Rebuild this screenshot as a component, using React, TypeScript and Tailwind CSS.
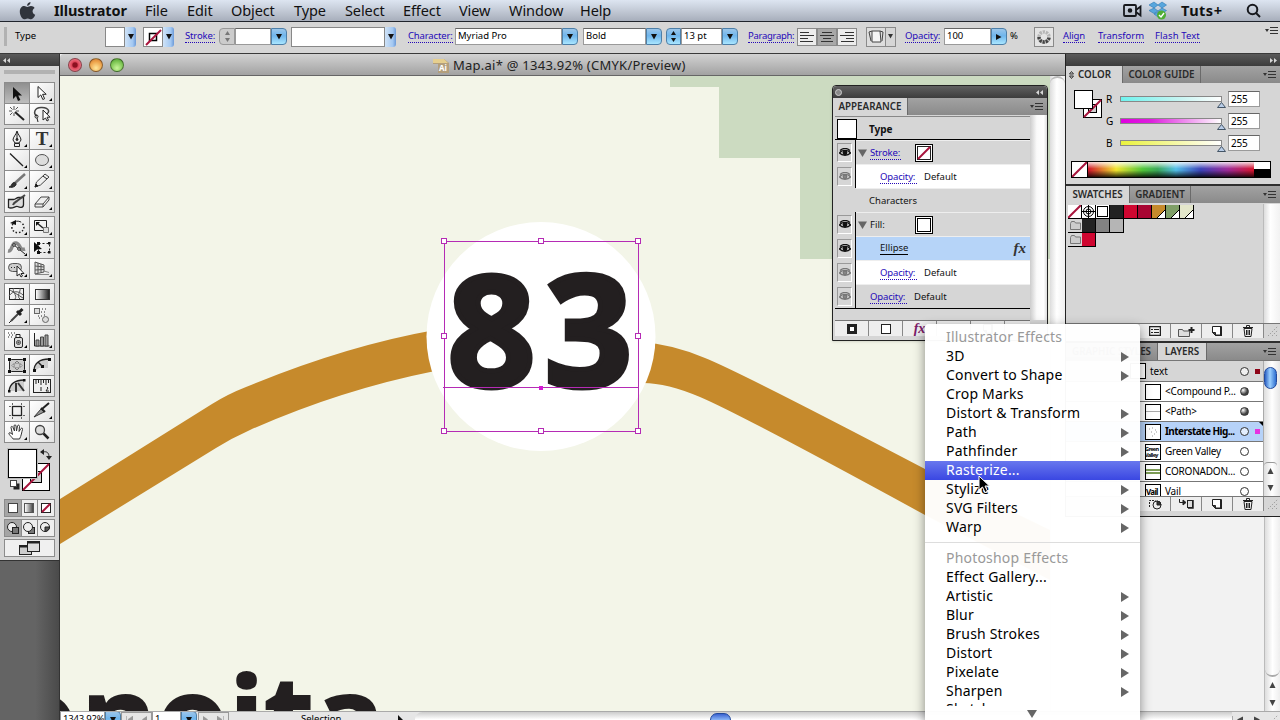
import type { ReactNode } from 'react';
import clsx from 'clsx';

interface MenuEntry {
  label: string;
  arrow?: boolean;
  active?: boolean;
}

interface Layer {
  name: string;
  thumb: ReactNode;
  filled?: boolean;
  selected?: boolean;
}

const barMenus = [
  { label: 'File', width: 'w-[42px]' },
  { label: 'Edit', width: 'w-[44px]' },
  { label: 'Object', width: 'w-[63px]' },
  { label: 'Type', width: 'w-[51px]' },
  { label: 'Select', width: 'w-[58px]' },
  { label: 'Effect', width: 'w-[56px]' },
  { label: 'View', width: 'w-[50px]' },
  { label: 'Window', width: 'w-[71px]' },
  { label: 'Help', width: 'w-[60px]' },
];

const illustratorEffects: MenuEntry[] = [
  { label: '3D', arrow: true },
  { label: 'Convert to Shape', arrow: true },
  { label: 'Crop Marks' },
  { label: 'Distort & Transform', arrow: true },
  { label: 'Path', arrow: true },
  { label: 'Pathfinder', arrow: true },
  { label: 'Rasterize...', active: true },
  { label: 'Stylize', arrow: true },
  { label: 'SVG Filters', arrow: true },
  { label: 'Warp', arrow: true },
];

const photoshopEffects: MenuEntry[] = [
  { label: 'Effect Gallery...' },
  { label: 'Artistic', arrow: true },
  { label: 'Blur', arrow: true },
  { label: 'Brush Strokes', arrow: true },
  { label: 'Distort', arrow: true },
  { label: 'Pixelate', arrow: true },
  { label: 'Sharpen', arrow: true },
];

function Icon({ children, w = 24, h = 20 }: { children: ReactNode; w?: number; h?: number }) {
  return (
    <svg width={w} height={h} viewBox={`0 0 ${w} ${h}`} fill="none" stroke="#222" strokeWidth="1" className="block shrink-0">
      {children}
    </svg>
  );
}

/* Toolbox glyphs, each on a 24x20 cell */
const tools: Record<string, ReactNode> = {
  select: <path d="M8 4v12l3-3 2 5 2.4-1-2.2-4.6H17z" fill="#111" stroke="none" />,
  direct: <path d="M8 3.5v11l2.8-2.6 2 4.6 1.8-.8-2-4.4h3.6z" fill="#fff" />,
  wand: (
    <>
      <path d="M10 8l9 8" strokeWidth="2" />
      <path d="M9 2v4M9 9v3M4 7h3M11 7h3M5 3l2.5 2.5M13 3l-2.5 2.5M5 11l2.5-2.5" stroke="#555" />
    </>
  ),
  lasso: (
    <>
      <path d="M7 12C3 10 4 3 12 3.5S20 9 16 10" stroke="#444" strokeWidth="1.5" />
      <circle cx="6.5" cy="12.5" r="1.5" />
      <path d="M7 14l1 4M13 6v10l2.5-2 1.5 3 1.5-.8-1.5-3h3z" fill="#fff" />
    </>
  ),
  pen: (
    <>
      <path d="M12 2c-1 4-4 6-4 9l2 3h4l2-3c0-3-3-5-4-9z" fill="#eee" />
      <path d="M12 3v7M9.5 14.5h5v3h-5z" />
      <circle cx="12" cy="10.5" r="1" fill="#222" />
    </>
  ),
  line: <path d="M5 3.5l13 12.5" strokeWidth="1.3" />,
  ellipse: <ellipse cx="12" cy="10" rx="6.5" ry="5.5" fill="#ddd" stroke="#555" />,
  brush: (
    <>
      <path d="M10 12L20 3" strokeWidth="2.5" stroke="#777" />
      <path d="M4 16c3 0 2-4 5-4.5 2 0 3 2 1 3.5-2 1.5-4 1.5-6 1z" fill="#333" />
    </>
  ),
  pencil: (
    <>
      <path d="M5 16l1.5-5L15 3l4 3-8.5 8z" fill="#eee" stroke="#444" />
      <path d="M5 16l1-3 2 2zM13 5l4 3" fill="#111" />
    </>
  ),
  blob: (
    <>
      <path d="M3.5 7.5h5c2 0 3-2 5-2h5v7c0 4-4 3-6 2s-5 3-9 1z" fill="#ddd" strokeWidth="1.3" />
      <path d="M8 13c1-3 3-3 4-4l8-6" stroke="#444" strokeWidth="2" />
    </>
  ),
  eraser: <path d="M5 12l6-7h8l-6 7zM5 12v3h8v-3M13 15l6-7V5" fill="#eee" stroke="#444" />,
  rotate: (
    <>
      <path d="M8 7a6 5.5 0 1 0 8-1.5" strokeDasharray="1.5 1.8" strokeWidth="1.5" />
      <path d="M8 6c2-2 5-2.5 8-1" />
      <path d="M5 6l6-3v5z" fill="#111" stroke="none" />
    </>
  ),
  scale: (
    <>
      <path d="M4.5 3.5h12v10h-12z" />
      <path d="M13.5 10.5h5v5h-5z" fill="#ddd" stroke="#777" />
      <path d="M7 6l6 5" strokeWidth="1.5" />
      <path d="M6 5h4l-4 4z" fill="#111" stroke="none" />
    </>
  ),
  warp: (
    <>
      <path d="M3 13c5 1 3-9 8-8s3 8 9 6" stroke="#888" strokeWidth="3.5" />
      <path d="M9 7l11 9" />
      <circle cx="9" cy="7" r="1.3" fill="#fff" />
      <circle cx="14" cy="11" r="1.3" fill="#fff" />
    </>
  ),
  freeTransform: (
    <>
      <path d="M8.5 5.5h11v9h-11z" strokeDasharray="2 2" />
      <path d="M7 4h3v3H7zM18 4h2.5v2.5H18zM18 13h2.5v2.5H18zM7 13h3v3H7z" fill="#111" stroke="none" />
      <path d="M4 4v10l3-2.5 5-.5z" fill="#111" stroke="none" />
    </>
  ),
  shapeBuilder: (
    <>
      <rect x="3.5" y="4.5" width="13" height="8" rx="4" fill="#ccc" stroke="#555" />
      <path d="M6 8.5h8" strokeDasharray="1 2" />
      <path d="M12 7v10l2.5-2 1.5 3 1.5-1-1.5-2.5h3z" fill="#fff" />
    </>
  ),
  perspective: (
    <>
      <path d="M5 3v12l9-2V6zM5 7l9 1M5 11l9-.5M8 4v10M11 5v8.5" fill="#ddd" stroke="#555" />
      <path d="M5 15.5h14M14 12l5 1.5" stroke="#888" />
    </>
  ),
  mesh: (
    <>
      <rect x="4.5" y="4.5" width="14" height="11" />
      <path d="M4 12c4-6 10-5 14-1M9 4c-3 4 4 7 1 11M15 4c1 4-4 8 0 11M5 6l13 8" stroke="#555" />
    </>
  ),
  spray: (
    <>
      <rect x="9.5" y="7.5" width="8" height="10" rx="1.5" fill="#ddd" />
      <path d="M11 7V4.5h4V7M3 3h1M6 3h1M9 3h1M4 5h1M7 5h1M3 7h1M6 7h1" />
      <circle cx="13.5" cy="12.5" r="2" stroke="#444" />
      <circle cx="13.5" cy="12.5" r=".6" />
    </>
  ),
  chart: (
    <>
      <path d="M4.5 3v13h15" />
      <path d="M6 10h3v6H6zM10.5 7h3v9h-3zM15 5h3v11h-3z" fill="#999" stroke="#444" />
    </>
  ),
  eyedropper: (
    <>
      <path d="M6 16l8-8" stroke="#444" strokeWidth="2" />
      <path d="M12 6l4 4M14 7.5l3.5-3.5" strokeWidth="3" />
      <path d="M4 18l2-2" />
    </>
  ),
  blend: (
    <>
      <rect x="4.5" y="3.5" width="5" height="5" fill="#ddd" stroke="#666" />
      <path d="M12 4h1M15 4h1M11 7h1M14 7h1M8 11h1M11 11h1M14 10h1M9 13h1" />
      <circle cx="15.5" cy="14.5" r="3" fill="#ddd" stroke="#666" />
    </>
  ),
  envelope: (
    <>
      <rect x="4.5" y="4.5" width="15" height="12" rx="2" fill="#ccc" />
      <path d="M3 3h3v3H3zM18 3h3v3h-3zM3 15h3v3H3zM18 15h3v3h-3z" fill="#111" stroke="none" />
      <path d="M12 6l2 2h-4zM12 15l2-2h-4zM7 10.5l2-2v4zM17 10.5l-2-2v4z" fill="#fff" stroke="#555" strokeWidth=".7" />
    </>
  ),
  reshape: (
    <>
      <path d="M5 16C4 8 10 4 18 4v9H9z" fill="#ccc" stroke="none" />
      <path d="M4 16C4 8 10 4 19 4" strokeWidth="1.3" />
      <path d="M3 14h3v3H3zM18 3h3v3h-3zM11 10h3v3h-3z" fill="#111" stroke="none" />
      <path d="M12 11L8 7" strokeWidth="1.5" />
    </>
  ),
  anchor: (
    <>
      <path d="M4 15C5 8 10 4 19 4v11h-8z" fill="#ccc" stroke="none" />
      <path d="M4 15C5 8 10 4 19 4" strokeWidth="1.3" />
      <path d="M3 14h2.5v2.5H3zM18 3h2.5v2.5H18z" fill="#111" stroke="none" />
      <path d="M11 7v9M13 7l6 8" strokeWidth="2" stroke="#333" />
    </>
  ),
  measure: (
    <>
      <rect x="3.5" y="3.5" width="17" height="13" fill="#eee" />
      <path d="M6 4v4M8.5 4v3M11 4v5M13.5 4v3M16 4v5M18.5 4v3M11 11v4M17 11l1 1-2 3h3" />
    </>
  ),
  artboard: (
    <>
      <rect x="7.5" y="5.5" width="9" height="9" strokeWidth="1.3" />
      <path d="M7.5 2v2M16.5 2v2M7.5 16v2M16.5 16v2M4 5.5h2M4 14.5h2M18 5.5h2M18 14.5h2" stroke="#666" />
    </>
  ),
  slice: (
    <>
      <path d="M4 16l7-8 3 3z" fill="#999" stroke="#333" />
      <path d="M12 8l7-6M11 7l4 4" strokeWidth="2" />
    </>
  ),
  hand: <path d="M8 17c-1-2-5-5-4-6s3 1 3.5 1.5L6 5.5c0-1.5 1.5-1.5 2 0L9.5 9 9 4c0-1.5 2-1.5 2 0l.5 5 1-5c.5-1.5 2-1 2 .5L14 9.5l2-3c1-1 2 0 1.5 1-1 3-1 6-3 9.5z" fill="#fff" stroke="#333" />,
  zoom: (
    <>
      <circle cx="10" cy="8" r="4.5" fill="#ddd" stroke="#444" strokeWidth="1.3" />
      <path d="M13.5 11.5l5 5" strokeWidth="2.5" />
    </>
  ),
};

const toolGroups: string[][] = [
  ['select', 'direct', 'wand', 'lasso'],
  ['pen', 'type', 'line', 'ellipse', 'brush', 'pencil', 'blob', 'eraser'],
  ['rotate', 'scale', 'warp', 'freeTransform', 'shapeBuilder', 'perspective'],
  ['mesh', 'gradient', 'eyedropper', 'blend'],
  ['spray', 'chart'],
  ['envelope', 'reshape', 'anchor', 'measure'],
  ['artboard', 'slice', 'hand', 'zoom'],
];

const noFlyout = ['select', 'wand', 'lasso', 'blob', 'freeTransform', 'mesh', 'gradient', 'blend', 'envelope', 'reshape', 'anchor', 'measure', 'artboard', 'zoom'];

function ToolCell({ name }: { name: string }) {
  return (
    <div
      className={clsx(
        'relative h-5 w-6',
        name === 'select'
          ? 'bg-[linear-gradient(to_bottom,#8f8f8f,#bdbdbd)]'
          : 'bg-[linear-gradient(135deg,#ffffff,#e2e2e2)]'
      )}
    >
      {name === 'type' && (
        <span className="block text-center font-['Liberation_Serif',serif] text-[19px] leading-5 font-bold text-[#333]">T</span>
      )}
      {name === 'gradient' && (
        <div className="flex h-full items-center justify-center">
          <div className="h-[11px] w-[15px] border border-[#333] bg-[linear-gradient(to_right,#fff,#222)]" />
        </div>
      )}
      {tools[name] && <Icon>{tools[name]}</Icon>}
      {!noFlyout.includes(name) && (
        <svg className="absolute right-0.5 bottom-0.5" width="3" height="3">
          <path d="M3 0v3H0z" fill="#000" />
        </svg>
      )}
    </div>
  );
}

function Toolbox() {
  return (
    <aside className="flex w-[60px] shrink-0 flex-col border-r border-[#333] bg-[linear-gradient(to_right,#646464_60%,#4a4a4a)]">
      <div className="flex h-3 shrink-0 items-center bg-[linear-gradient(to_bottom,#5a5a5a,#3c3c3c)] pl-[3px]">
        <DoubleArrow />
      </div>
      <div className="flex h-[495px] shrink-0 flex-col border-b border-[#333] bg-[#d6d6d6] pl-1">
        <div className="mt-1 mb-2 h-1 w-[51px] bg-[radial-gradient(#888_0.6px,transparent_0.8px)] bg-[size:2px_2px]" />
        <div className="flex flex-col gap-[3px]">
          {toolGroups.map((group, i) => (
            <div key={i} className="grid w-[51px] grid-cols-2 gap-px bg-[#8c8c8c] p-px">
              {group.map((name) => (
                <ToolCell key={name} name={name} />
              ))}
            </div>
          ))}
        </div>
        {/* Fill and stroke proxies */}
        <div className="relative mt-1.5 h-[44px] w-[51px]">
          <div className="absolute top-[14px] left-[18px]">
            <Icon w={28} h={28}>
              <rect x=".5" y=".5" width="27" height="27" fill="#fff" stroke="#000" />
              <rect x="8.5" y="8.5" width="11" height="11" fill="#d0d0d0" stroke="#000" />
              <path d="M1 27L27 1" stroke="#a8143c" strokeWidth="2" />
            </Icon>
          </div>
          <div className="absolute top-0 left-1 size-[29px] border border-black bg-white outline outline-[#bbb]" />
          <svg className="absolute top-0 left-[36px]" width="12" height="11" fill="none" stroke="#222">
            <path d="M3 3c4-1 6 1 6 5" />
            <path d="M0 3l4-3v6zM6 7h6l-3 4z" fill="#222" stroke="none" />
          </svg>
          <svg className="absolute top-[31px] left-1.5" width="10" height="10">
            <rect x="3.5" y="3.5" width="6" height="6" fill="#222" />
            <rect x=".5" y=".5" width="6" height="6" fill="#fff" stroke="#444" />
          </svg>
        </div>
        <div className="mt-[6px] grid w-[51px] grid-cols-3 gap-px bg-[#8c8c8c] p-px">
          <div className="flex h-4 items-center justify-center bg-[#a5a5a5]">
            <div className="size-2.5 border border-[#444] bg-white" />
          </div>
          <div className="flex h-4 items-center justify-center bg-[#eee]">
            <div className="size-2.5 border border-[#555] bg-[linear-gradient(to_right,#fff,#444)]" />
          </div>
          <div className="flex h-4 items-center justify-center bg-[#eee]">
            <NoneBox size={10} />
          </div>
        </div>
        <div className="mt-[2px] grid w-[51px] grid-cols-3 gap-px bg-[#8c8c8c] p-px">
          {['#777', '#777', '#999'].map((shade, i) => (
            <div key={i} className={clsx('flex h-4 items-center justify-center', i === 0 ? 'bg-[#a5a5a5]' : 'bg-[#eee]')}>
              <Icon w={14} h={14}>
                {i < 2 && <rect x="6.5" y="6.5" width="6" height="6" fill={shade} />}
                <circle cx="6" cy="6" r="4.5" fill="#eee" />
                {i === 0 && <rect x="6.5" y="6.5" width="6" height="6" fill={shade} />}
                {i === 2 && <path d="M6 6h4.5a4.5 4.5 0 0 1-4.5 4.5z" fill="#555" />}
              </Icon>
            </div>
          ))}
        </div>
        <div className="mt-[2px] flex h-[18px] w-[51px] items-center justify-center border border-[#8c8c8c] bg-[#f0f0f0]">
          <Icon w={24} h={16}>
            <rect x="1.5" y="5.5" width="12" height="9" fill="#ccc" />
            <path d="M1 6.5h13" strokeWidth="2" />
            <rect x="9.5" y="1.5" width="12" height="10" fill="#ddd" />
            <path d="M9 2.5h13" strokeWidth="2" />
          </Icon>
        </div>
      </div>
    </aside>
  );
}

function DoubleArrow({ right }: { right?: boolean }) {
  return (
    <svg width="7" height="5" className={right ? 'rotate-180' : ''}>
      <path d="M3 0v5L0 2.5zM7 0v5L4 2.5z" fill="#d8d8d8" />
    </svg>
  );
}

function NoneBox({ size }: { size: number }) {
  return (
    <svg width={size} height={size} className="block shrink-0">
      <rect x=".5" y=".5" width={size - 1} height={size - 1} fill="#fff" stroke="#222" />
      <path d={`M1 ${size - 1}L${size - 1} 1`} stroke="#a8143c" strokeWidth="2" />
    </svg>
  );
}

function DropButton({ light, right }: { light?: boolean; right?: boolean }) {
  return (
    <div
      className={clsx(
        'flex items-center justify-center',
        light
          ? 'h-[20px] w-[11px] rounded-r-[3px] bg-[linear-gradient(to_right,#cfe2f6,#a3c8f2_70%,#6c9ad8)]'
          : 'h-[17px] w-4 rounded-r-[4px] border border-[#4d7fa8] bg-[linear-gradient(to_bottom,#9cc6ea,#6fb5ec_45%,#a9e6ff)]'
      )}
    >
      <svg width="6" height="6" className={right ? '-rotate-90' : ''}>
        <path d="M0 0h6L3 5.5z" fill="#111" />
      </svg>
    </div>
  );
}

function Link({ children, className }: { children: ReactNode; className?: string }) {
  return (
    <span className={clsx('inline-block border-b border-dotted border-[#2408b8] leading-[13px] tracking-[-0.15px] whitespace-nowrap text-[#2408b8]', className)}>
      {children}
    </span>
  );
}

function Field({ children, className }: { children?: ReactNode; className?: string }) {
  return (
    <div className={clsx('flex h-[17px] items-center border border-[#9a9a9a] border-t-[#666] bg-white pl-0.5 whitespace-nowrap', className)}>
      {children}
    </div>
  );
}

function MenuBar() {
  return (
    <header className="flex h-[22px] shrink-0 items-center border-b border-[#20242c] bg-[linear-gradient(to_bottom,#dde5f1,#c3cad6_50%,#a7aebb)] text-[14.5px] tracking-[-0.1px] text-[#111]">
      <div className="flex w-[54px] shrink-0 pl-[19px]">
        <svg width="17" height="19" viewBox="0 0 17 19">
          <path d="M11.5 1c.2 2-1.5 4-3.5 3.8C8 2.8 9.5 1.2 11.5 1zM8.3 6c1 0 1.8-1 3.7-1 1.5 0 2.8.7 3.6 1.9-3 1.8-2.5 5.6.6 6.8-.8 2.2-2.3 4.5-4 4.5-1.4 0-1.8-.8-3.5-.8s-2.2.8-3.5.8C3 18.2.8 14 .8 10.8.8 7 3 5.1 5.2 5.1c1.4 0 2.3.9 3.1.9z" fill="#30343c" />
        </svg>
      </div>
      <span className="w-[91px] shrink-0 font-bold">Illustrator</span>
      {barMenus.map((menu) => (
        <span key={menu.label} className={clsx('shrink-0', menu.width)}>
          {menu.label}
        </span>
      ))}
      <div className="ml-auto flex items-center">
        <svg width="19" height="14" fill="none" stroke="#16181d" strokeWidth="1.8">
          <rect x="1" y="1" width="12" height="11" rx="1" />
          <path d="M13 6l4.5-3.5v9L13 8" />
          <circle cx="7" cy="6.5" r="1.4" fill="#16181d" />
        </svg>
        <svg width="20" height="19" className="ml-[6px]">
          <path d="M6 1l4 3-4 3-5-3zM14 1l4.5 3-4.5 3-4-3zM1 9.5L6 7l4 3-4 2.5zM18.5 9.5L14 7l-4 3 4 2.5zM10 11l4 2-4 3-4-3z" fill="#58a6dd" stroke="#2e78b4" strokeWidth=".6" />
          <circle cx="13.5" cy="14" r="4.5" fill="#4fae35" />
          <path d="M11 14l2 2 3-4" stroke="#fff" strokeWidth="1.4" fill="none" />
        </svg>
        <span className="ml-[13px] w-[65px] font-bold tracking-[0.5px]">Tuts+</span>
        <svg width="16" height="16" fill="none" stroke="#16181d" strokeWidth="2" className="mr-[18px]">
          <circle cx="6.5" cy="6.5" r="4.8" />
          <path d="M10 10l4 4" />
        </svg>
      </div>
    </header>
  );
}

function AlignButton({ rows, on }: { rows: string; on?: boolean }) {
  return (
    <div className={clsx('flex h-[18px] w-5 items-center justify-center border border-[#8a8a8a]', on ? 'bg-[#a8a8a8]' : 'bg-[#ececec]')}>
      <svg width="14" height="12">
        <path d={rows} stroke="#333" />
      </svg>
    </div>
  );
}

function ControlBar() {
  return (
    <div className="flex h-8 shrink-0 items-center border-b border-[#3a3a3a] bg-[#d6d6d6] pb-0.5 text-[9.5px] text-black [&>*]:shrink-0">
      <div className="ml-1 h-[19px] w-[11px] bg-[radial-gradient(#888_0.6px,transparent_0.8px)] bg-[size:2px_2px] bg-clip-content pr-2" />
      <span className="w-[90px]">Type</span>
      <div className="flex w-[38px]">
        <div className="h-[20px] w-5 border border-[#888] bg-white" />
        <DropButton light />
      </div>
      <div className="flex w-[42px]">
        <div className="border border-[#888] bg-white">
          <Icon w={18} h={18}>
            <rect x="5.5" y="5.5" width="7" height="7" stroke="#000" strokeWidth="1.5" />
            <path d="M2 17L17 2" stroke="#a8143c" strokeWidth="2" />
          </Icon>
        </div>
        <DropButton light />
      </div>
      <div className="w-[34px]"><Link>Stroke:</Link></div>
      <div className="flex w-[72px]">
        <div className="flex h-[17px] w-4 flex-col items-center justify-center gap-[3px] rounded-l border border-[#999] bg-[#ccc]">
          <svg width="5" height="4"><path d="M0 4h5L2.5 0z" fill="#777" /></svg>
          <svg width="5" height="4"><path d="M0 0h5L2.5 4z" fill="#777" /></svg>
        </div>
        <Field className="w-9" />
        <DropButton />
      </div>
      <div className="flex w-[117px]">
        <div className="h-[20px] w-[94px] border border-[#888] bg-white" />
        <DropButton light />
      </div>
      <div className="w-[47px]"><Link>Character:</Link></div>
      <div className="flex w-[128px]">
        <Field className="w-[107px]">Myriad Pro</Field>
        <DropButton />
      </div>
      <div className="flex w-[83px]">
        <Field className="w-[63px]">Bold</Field>
        <DropButton />
      </div>
      <div className="flex w-[82px]">
        <div className="flex h-[17px] w-[15px] flex-col items-center justify-center gap-[3px] rounded-l-[4px] border border-[#4d7fa8] bg-[linear-gradient(to_bottom,#9cc6ea,#6fb5ec_45%,#a9e6ff)]">
          <svg width="5" height="4"><path d="M0 4h5L2.5 0z" fill="#111" /></svg>
          <svg width="5" height="4"><path d="M0 0h5L2.5 4z" fill="#111" /></svg>
        </div>
        <Field className="w-[41px]">13 pt</Field>
        <DropButton />
      </div>
      <div className="w-[49px]"><Link className="tracking-[-0.3px]!">Paragraph:</Link></div>
      <div className="flex w-[69px]">
        <AlignButton rows="M0 1.5h9M0 4.5h14M0 7.5h8M0 10.5h13" />
        <AlignButton on rows="M2 1.5h10M0 4.5h14M3 7.5h8M1 10.5h12" />
        <AlignButton rows="M5 1.5h9M0 4.5h14M6 7.5h8M1 10.5h13" />
      </div>
      <div className="flex w-[39px]">
        <div className="flex h-5 w-5 items-center justify-center border border-[#8a8a8a] bg-[#ddd]">
          <Icon w={16} h={14}>
            <path d="M4 1h8l1 11H4zM1 2l2 9M15 2l-1 9M1 2l3-1M15 2l-3-1" stroke="#444" fill="#f5f5f5" />
          </Icon>
        </div>
        <div className="flex h-5 w-2.5 items-center justify-center border border-l-0 border-[#8a8a8a]">
          <svg width="5" height="5"><path d="M0 0h5L2.5 4.5z" fill="#333" /></svg>
        </div>
      </div>
      <div className="w-[39px]"><Link>Opacity:</Link></div>
      <div className="flex w-[66px]">
        <Field className="w-[47px]">100</Field>
        <DropButton right />
      </div>
      <span className="w-[24px]">%</span>
      <div className="flex h-5 w-5 items-center justify-center border border-[#8a8a8a] bg-[#e4e4e4]">
        <svg width="16" height="16" fill="none" strokeWidth="3.5">
          <circle cx="8" cy="8" r="5" stroke="#b5b5b5" strokeDasharray="2.2 .9" />
          <path d="M3 8a5 5 0 0 0 10 0" stroke="#444" strokeDasharray="2.2 .9" />
        </svg>
      </div>
      <div className="ml-[9px] w-[35px]"><Link>Align</Link></div>
      <div className="w-[57px]"><Link className="tracking-normal!">Transform</Link></div>
      <div className="w-[110px]"><Link className="tracking-[0.1px]!">Flash Text</Link></div>
      <PanelMenu className="mb-2.5" />
    </div>
  );
}

function PanelMenu({ className }: { className?: string }) {
  return (
    <svg width="13" height="9" className={clsx('shrink-0', className)}>
      <path d="M0 2h4L2 5z" fill="#333" />
      <path d="M5 .5h8M5 3.5h8M5 6.5h8" stroke="#333" />
    </svg>
  );
}

function PanelTabs({ tabs, active }: { tabs: { label: string; width: string; glyph?: boolean }[]; active: string }) {
  return (
    <div className="flex h-[17px] shrink-0 items-stretch bg-[linear-gradient(to_bottom,#a2a2a2,#8a8a8a)] text-[9.8px] font-semibold text-[#2a2a2a]">
      {tabs.map((tab) => (
        <div
          key={tab.label}
          className={clsx(
            'flex items-center justify-center gap-1 border-r border-[#6a6a6a] leading-none whitespace-nowrap',
            tab.width,
            tab.label === active && 'bg-[#d6d6d6]'
          )}
        >
          {tab.glyph && (
            <svg width="5" height="8" fill="none" stroke="#333"><path d="M.5 3l2-2.5 2 2.5zM.5 5l2 2.5 2-2.5z" /></svg>
          )}
          {tab.label}
        </div>
      ))}
      <PanelMenu className="mt-[5px] mr-1 ml-auto" />
    </div>
  );
}

const channels = [
  { name: 'R', fill: 'bg-[linear-gradient(to_right,#6ff3ee,#c8f4f2_60%,#fff)]' },
  { name: 'G', fill: 'bg-[linear-gradient(to_right,#e000e0,#dd20dd_30%,#fff)]' },
  { name: 'B', fill: 'bg-[linear-gradient(to_right,#eaf23c,#f6f8b0_60%,#fff)]' },
];

function ColorPanel() {
  return (
    <section className="flex h-[101px] shrink-0 flex-col bg-[#d6d6d6]">
      <div className="flex h-[78px]">
        <div className="relative w-[36px] shrink-0">
          <div className="absolute top-4 left-[17px]">
            <Icon w={19} h={19}>
              <rect x=".5" y=".5" width="18" height="18" fill="#fff" stroke="#000" />
              <rect x="5.5" y="5.5" width="8" height="8" fill="#d0d0d0" stroke="#000" />
              <path d="M1 18L18 1" stroke="#a8143c" strokeWidth="2" />
            </Icon>
          </div>
          <div className="absolute top-[7px] left-2 size-[19px] border border-black bg-white" />
        </div>
        <div className="flex flex-col pt-2">
          {channels.map((channel) => (
            <div key={channel.name} className="flex h-[22px] items-start text-[10px]">
              <span className="w-[18px] pl-1 leading-[16px]">{channel.name}</span>
              <div className="relative mt-[5px] h-1.5 w-[102px] border border-[#888]">
                <div className={clsx('h-full', channel.fill)} />
                <svg className="absolute top-[5px] left-[96px]" width="9" height="6">
                  <path d="M.5 5.5L4.5.5l4 5z" fill="#b9cde8" stroke="#456" />
                </svg>
              </div>
              <Field className="ml-[6px] h-4! w-8 tracking-[-0.2px]">255</Field>
            </div>
          ))}
        </div>
      </div>
      <div className="ml-[5px] flex h-[17px] w-[200px] border border-black">
        <div className="h-full w-4 overflow-hidden border-r border-black">
          <svg width="15" height="15" className="block">
            <rect width="15" height="15" fill="#fff" />
            <path d="M0 15L15 0" stroke="#a8143c" strokeWidth="2" />
          </svg>
        </div>
        <div className="h-full flex-1 bg-[linear-gradient(to_bottom,rgba(255,255,255,.85),transparent_45%,transparent_55%,rgba(0,0,0,.8)),linear-gradient(to_right,#d0142c,#f2e52e_17%,#4fc53a_33%,#3aa85a_42%,#52bfe8_53%,#3b42b8_68%,#9c2a98_84%,#d8142c)]" />
        <div className="h-full w-4 bg-[linear-gradient(to_bottom,#fff_50%,#000_50%)]" />
      </div>
    </section>
  );
}

function Swatch({ className, corner }: { className: string; corner?: boolean }) {
  return (
    <div className={clsx('size-3.5 border-r border-b border-black', className)}>
      {corner && (
        <svg width="13" height="13" className="block">
          <path d="M13 5v8H5z" fill="#fff" />
          <path d="M13 5l-8 8" stroke="#000" />
        </svg>
      )}
    </div>
  );
}

function FolderIcon() {
  return (
    <div className="flex size-3.5 items-center justify-center border-b border-black">
      <svg width="11" height="9"><path d="M.5 8.5v-6l1-2h3l1 1.5h5v6.5z" fill="#ccc" stroke="#777" /></svg>
    </div>
  );
}

function SwatchesPanel() {
  return (
    <section className="flex h-[137px] shrink-0 flex-col bg-[#d6d6d6]">
      <div className="flex h-[119px]">
        <div className="flex flex-1 flex-col border-r border-[#bbb] pt-px pl-0.5">
          <div className="flex">
            <div className="size-3.5 border-r border-b border-black bg-white">
              <svg width="13" height="13" className="block"><path d="M0 13L13 0" stroke="#a8143c" strokeWidth="2" /></svg>
            </div>
            <div className="size-3.5 border-r border-b border-black bg-white">
              <svg width="13" height="13" className="block" fill="none" stroke="#000">
                <circle cx="6.5" cy="6.5" r="5" />
                <circle cx="6.5" cy="6.5" r="2.5" />
                <path d="M6.5 0v13M0 6.5h13" />
              </svg>
            </div>
            <div className="size-3.5 border-r border-b border-black bg-white p-px">
              <div className="size-full border border-black" />
            </div>
            <Swatch className="bg-[#222]" />
            <Swatch className="bg-[#cf0630]" />
            <Swatch className="bg-[#a80432]" />
            <Swatch className="bg-[#c68a2c]" corner />
            <Swatch className="bg-[#7f9f67]" corner />
            <Swatch className="bg-[#e3e6ca]" corner />
          </div>
          <div className="flex">
            <FolderIcon />
            <Swatch className="bg-[#222]" />
            <Swatch className="bg-[#828282]" />
            <Swatch className="bg-[#b5b5b5]" />
          </div>
          <div className="flex">
            <FolderIcon />
            <Swatch className="bg-[#cf0630]" />
          </div>
        </div>
        <div className="w-4 bg-[linear-gradient(to_right,#ddd,#fff_40%,#f2f2f2)]" />
      </div>
      <PanelFooter icons={[<SwatchKinds key="kinds" />, <FolderPlus key="group" />, <PageIcon key="new" />, <TrashIcon key="trash" />]} />
    </section>
  );
}

function SwatchKinds() {
  return (
    <Icon w={12} h={10}>
      <rect x=".5" y=".5" width="11" height="9" strokeWidth="1.5" />
      <path d="M2 3.5h2M5 3.5h5M2 6.5h2M5 6.5h5" />
    </Icon>
  );
}

function FolderPlus() {
  return (
    <Icon w={17} h={11}>
      <path d="M.5 10.5v-7h4l1 1.5h6v5.5z" fill="#ddd" stroke="#555" />
      <path d="M13.5 1v6M10.5 4h6" strokeWidth="2" />
    </Icon>
  );
}

function PageIcon() {
  return (
    <Icon w={10} h={10}>
      <path d="M.5.5h9v9h-6l-3-3z" fill="#fff" />
      <path d="M.5 6.5h3v3z" fill="#444" />
      <path d="M9 1v8.5H4" strokeWidth="2" />
    </Icon>
  );
}

function TrashIcon() {
  return (
    <Icon w={10} h={12}>
      <path d="M1 3.5l1 8h6l1-8zM0 2.5h10M3.5 2V.5h3V2M3.5 5v5M5 5v5M6.5 5v5" />
    </Icon>
  );
}

function PanelFooter({ icons }: { icons: ReactNode[] }) {
  return (
    <div className="flex h-[15px] shrink-0 border-t border-[#777] bg-[#d6d6d6] pl-[74px]">
      {icons.map((icon, i) => (
        <div key={i} className="flex w-[31px] items-center justify-center border-r border-[#888] bg-[#eee]">
          {icon}
        </div>
      ))}
      <div className="flex flex-1 items-end justify-end p-0.5">
        <Grip />
      </div>
    </div>
  );
}

function Grip() {
  return (
    <svg width="10" height="10" fill="none" stroke="#888" strokeDasharray="1 1.8">
      <path d="M0 10L10 0M4 10l6-6M8 10l2-2" />
    </svg>
  );
}

const layers: Layer[] = [
  { name: '<Compound P...', thumb: null, filled: true },
  { name: '<Path>', thumb: <div className="mt-1.5 h-px bg-[#aaa]" />, filled: true },
  {
    name: 'Interstate Hig...',
    thumb: (
      <svg width="14" height="14"><path d="M3 4h1M6 3h1M9 5h1M5 7h1M8 9h1M10 7h1M6 11h1" stroke="#999" /></svg>
    ),
    selected: true,
  },
  { name: 'Green Valley', thumb: <div className="-ml-px pt-px text-[5.5px] leading-[6px] font-bold tracking-[-0.6px]">Green Valley</div> },
  { name: 'CORONADON...', thumb: <div className="mt-[4px] h-[5px] border-y-2 border-[#7c9c55]" /> },
  { name: 'Vail', thumb: <div className="text-[8px] leading-[14px] font-bold tracking-[-0.7px]">Vail</div> },
];

function Target({ filled }: { filled?: boolean }) {
  return (
    <div
      className={clsx(
        'size-[9px] shrink-0 rounded-full border border-[#333]',
        filled ? 'bg-[radial-gradient(circle_at_30%_30%,#fff,#444_60%)]' : 'bg-white/60'
      )}
    />
  );
}

function LayersPanel() {
  return (
    <section className="flex h-[156px] shrink-0 flex-col bg-[#d6d6d6]">
      <div className="flex h-[136px] border-t border-[#777]">
        <div className="flex flex-1 flex-col overflow-hidden text-[10px]">
          <div className="flex h-[21px] shrink-0 items-center border-b border-[#777]">
            <div className="ml-[64px] h-4 w-4 border border-black bg-white" />
            <span className="ml-1 flex-1">text</span>
            <Target />
            <div className="mr-[3px] ml-1.5 size-[5px] bg-[#8e0418]" />
          </div>
          {layers.map((layer) => (
            <div
              key={layer.name}
              className={clsx(
                'relative flex h-5 shrink-0 items-center border-b border-[#777]',
                layer.selected ? 'bg-[#b6d2f8] font-bold' : 'bg-white'
              )}
            >
              <div className="ml-[79px] h-4 w-4 shrink-0 overflow-hidden border border-black bg-white">{layer.thumb}</div>
              <span className={clsx('ml-1 flex-1 whitespace-nowrap', layer.selected ? 'tracking-[-0.55px]' : 'tracking-[-0.2px]')}>
                {layer.name}
              </span>
              <Target filled={layer.filled} />
              <div className={clsx('mr-[3px] ml-1.5 size-[5px]', layer.selected && 'bg-[#e632e0]')} />
              {layer.selected && (
                <svg width="4" height="4" className="absolute top-0 right-0"><path d="M0 0h4v4z" fill="#000" /></svg>
              )}
            </div>
          ))}
        </div>
        <div className="flex w-[17px] flex-col items-center border-l border-[#aaa] bg-[linear-gradient(to_right,#ddd,#fff_50%,#e6e6e6)] pr-[3px]">
          <div className="mt-[6px] h-[22px] w-[13px] shrink-0 rounded-full border border-[#234a9c] bg-[linear-gradient(to_right,#2b60c4,#9cd0ff_45%,#2f6fd0)]" />
          <div className="mt-auto flex h-[34px] w-full flex-col items-center justify-around rounded-t-sm border-t border-[#999]">
            <ScrollArrow dir="up" />
            <ScrollArrow dir="down" />
          </div>
        </div>
      </div>
      <PanelFooter
        icons={[
          <Icon key="mask" w={13} h={11}>
            <path d="M.5 8V1.5h6" strokeDasharray="2 1" />
            <circle cx="8" cy="6" r="4" fill="#eee" />
            <path d="M8 6V2a4 4 0 0 1 4 4z" fill="#333" />
          </Icon>,
          <Icon key="sublayer" w={15} h={10}>
            <path d="M.5 0v3.5H5" />
            <path d="M4 1l3 2.5L4 6z" fill="#222" />
            <rect x="8.5" y="1.5" width="5" height="7" fill="#ddd" />
            <path d="M14 1v8H9" strokeWidth="1.5" />
          </Icon>,
          <PageIcon key="new" />,
          <TrashIcon key="trash" />,
        ]}
      />
      <div className="h-[5px]" />
    </section>
  );
}

function ScrollArrow({ dir }: { dir: 'up' | 'down' | 'left' | 'right' }) {
  const turn = { up: 'rotate-180', down: '', left: 'rotate-90', right: '-rotate-90' }[dir];
  return (
    <svg width="7" height="7" className={clsx('shrink-0', turn)}>
      <path d="M.5 1h6l-3 6z" fill="#444" />
    </svg>
  );
}

function Dock() {
  return (
    <aside className="flex h-[463px] shrink-0 flex-col border-b border-l border-[#222] bg-[#2e2e2e]">
      <div className="flex h-3 shrink-0 items-center justify-end bg-[linear-gradient(to_bottom,#5a5a5a,#3c3c3c)] pr-[3px]">
        <DoubleArrow right />
      </div>
      <PanelTabs
        active="COLOR"
        tabs={[
          { label: 'COLOR', width: 'w-[57px] pr-2', glyph: true },
          { label: 'COLOR GUIDE', width: 'w-[78px]' },
        ]}
      />
      <ColorPanel />
      <div className="h-0.5 shrink-0" />
      <PanelTabs
        active="SWATCHES"
        tabs={[
          { label: 'SWATCHES', width: 'w-[64px]' },
          { label: 'GRADIENT', width: 'w-[61px]' },
        ]}
      />
      <div className="h-px shrink-0 bg-[#d6d6d6]" />
      <SwatchesPanel />
      <div className="h-0.5 shrink-0" />
      <PanelTabs
        active="LAYERS"
        tabs={[
          { label: 'GRAPHIC STYLES', width: 'w-[92px] justify-end! pr-1.5' },
          { label: 'LAYERS', width: 'w-[49px]' },
        ]}
      />
      <LayersPanel />
    </aside>
  );
}

function EyeCell({ dim }: { dim?: boolean }) {
  return (
    <div className="flex w-[21px] shrink-0 items-center border-r border-black pl-0.5">
      <div className="flex h-[19px] w-[15px] items-center justify-center border border-r-white border-b-white border-[#999]">
        <svg width="12" height="9" fill="none" stroke={dim ? '#777' : '#111'} strokeWidth="1.3">
          <path d="M.5 5C3 1.5 9 1.5 11.5 5 9 8 3 8 .5 5zM1 2.5C4 0 8 0 11 2.5" />
          <circle cx="6" cy="4.8" r="1.8" fill={dim ? '#888' : '#111'} />
        </svg>
      </div>
    </div>
  );
}

function AppearanceRow({ tone, eye, children }: { tone: 'gray' | 'white' | 'blue'; eye?: 'on' | 'dim'; children: ReactNode }) {
  return (
    <div className="flex h-6 shrink-0">
      {eye ? <EyeCell dim={eye === 'dim'} /> : <div className="w-[21px]" />}
      <div
        className={clsx(
          'flex flex-1 items-center border-t border-[#eee]',
          tone === 'white' && 'bg-white',
          tone === 'blue' && 'bg-[#b6d4f8]'
        )}
      >
        {children}
      </div>
    </div>
  );
}

function Disclosure() {
  return (
    <svg width="9" height="8" className="mr-[3px] ml-0.5 shrink-0">
      <path d="M0 .5h9L4.5 8z" fill="#666" />
    </svg>
  );
}

function AppearancePanel() {
  return (
    <div className="absolute top-[85px] left-[832px] flex h-[256px] w-[216px] flex-col rounded-t border border-[#222] bg-[#d6d6d6] text-[9.5px] text-[#111] shadow">
      <div className="flex h-3 shrink-0 items-center justify-between rounded-t bg-[linear-gradient(to_bottom,#606060,#3c3c3c)] pr-1 pl-0.5">
        <div className="size-[7px] rounded-full border border-[#ccc] bg-[#888]" />
        <DoubleArrow />
      </div>
      <PanelTabs active="APPEARANCE" tabs={[{ label: 'APPEARANCE', width: 'w-[75px]' }]} />
      <div className="flex h-[205px] pl-0.5">
        <div className="flex w-[195px] flex-col pt-px">
          <div className="flex h-[24px] shrink-0 items-center border-y border-t-[#888] border-b-black pt-px">
            <div className="ml-0.5 size-5 border border-black bg-white" />
            <span className="ml-3 pt-px text-[10px] font-bold">Type</span>
          </div>
          <AppearanceRow tone="gray" eye="on">
            <Disclosure />
            <Link className="w-[31px]">Stroke:</Link>
            <div className="ml-[14px] border border-black bg-white p-px"><NoneBox size={14} /></div>
          </AppearanceRow>
          <AppearanceRow tone="white" eye="dim">
            <Link className="ml-6 w-[37px]">Opacity:</Link>
            <span className="ml-[7px] pt-px">Default</span>
          </AppearanceRow>
          <AppearanceRow tone="gray">
            <span className="ml-[13px] pt-px">Characters</span>
          </AppearanceRow>
          <AppearanceRow tone="gray" eye="on">
            <Disclosure />
            <span className="w-[45px] pt-px">Fill:</span>
            <div className="size-[18px] border border-black bg-white p-px">
              <div className="size-full border border-black" />
            </div>
          </AppearanceRow>
          <AppearanceRow tone="blue" eye="on">
            <span className="ml-6 w-7 border-b border-black leading-[12px]">Ellipse</span>
            <span className="mr-1 ml-auto font-['Liberation_Serif',serif] text-[15px] font-bold text-[#333] italic">fx</span>
          </AppearanceRow>
          <AppearanceRow tone="white" eye="dim">
            <Link className="ml-6 w-[37px]">Opacity:</Link>
            <span className="ml-[7px] pt-px">Default</span>
          </AppearanceRow>
          <AppearanceRow tone="gray" eye="dim">
            <Link className="ml-[14px] w-[37px]">Opacity:</Link>
            <span className="ml-[7px] pt-px">Default</span>
          </AppearanceRow>
          <div className="h-px shrink-0 bg-black" />
        </div>
        <div className="flex-1 bg-[linear-gradient(to_right,#ccc,#fafafa_40%,#fff_80%,#ddd)]" />
      </div>
      <div className="ml-0.5 flex h-4 w-[195px] border-t border-[#777] bg-[#eee] [&>div]:flex [&>div]:w-[34px] [&>div]:items-center [&>div]:justify-center [&>div]:border-r [&>div]:border-[#888]">
        <div><div className="size-[10px] border-[3px] border-[#222] bg-white" /></div>
        <div><div className="size-[10px] border border-[#222] bg-white" /></div>
        <div className="font-['Liberation_Serif',serif] text-[14px] font-bold text-[#7c1c68] italic">fx</div>
        <div />
        <div><PageIcon /></div>
      </div>
    </div>
  );
}

function EffectItem({ label, arrow, active }: MenuEntry) {
  return (
    <div
      className={clsx(
        'flex h-[19px] shrink-0 items-center justify-between pr-[11px] pl-[21px]',
        active && 'bg-[linear-gradient(to_bottom,#6877ee,#3a47e2)] text-white'
      )}
    >
      <span className="-mt-0.5">{label}</span>
      {arrow && (
        <svg width="8" height="10"><path d="M0 0v10l8-5z" fill="#666" /></svg>
      )}
    </div>
  );
}

function EffectMenu() {
  return (
    <div className="absolute top-[324px] left-[925px] flex h-[400px] w-[215px] flex-col rounded-t-[4px] bg-white/97 pt-[3px] text-[14px] leading-[19px] tracking-[0.2px] text-black shadow-[0_4px_12px_rgba(0,0,0,.45)]">
      <div className="h-5 shrink-0 pl-[21px] text-[#999]">Illustrator Effects</div>
      {illustratorEffects.map((item) => (
        <EffectItem key={item.label} {...item} />
      ))}
      <div className="mt-[5px] mb-[6px] h-px shrink-0 bg-[#ddd]" />
      <div className="-mt-px h-5 shrink-0 pl-[21px] text-[#999]">Photoshop Effects</div>
      {photoshopEffects.map((item) => (
        <EffectItem key={item.label} {...item} />
      ))}
      <div className="h-[5px] shrink-0 overflow-hidden pl-[21px]">
        <div className="-mt-0.5">Sketch</div>
      </div>
      <svg width="10" height="8" className="mt-1 ml-[102px] shrink-0"><path d="M0 0h10L5 8z" fill="#666" /></svg>
      {/* Pointer */}
      <svg width="14" height="20" className="absolute top-[151px] left-[53px]">
        <path d="M1 1v14l3.5-3 2.5 5.5 2.5-1.2L7 11h4.5z" fill="#000" stroke="#fff" />
      </svg>
    </div>
  );
}

const handles = [
  [444, 241], [541, 241], [638, 241],
  [444, 336], [638, 336],
  [444, 431], [541, 431], [638, 431],
];

/* The artwork shares the window's coordinate space */
function Artboard() {
  return (
    <svg viewBox="60 76 990 635" width="990" height="635" className="block shrink-0 bg-[#f3f5e8]">
      <path d="M670 76H1050V259H800V158H719V87H670z" fill="#ccdbc1" />
      <path d="M60 499L212 404Q228 394 246 387Q345 346 435 330V371Q340 390 250 430Q232 438 216 448L60 544z" fill="#c68a2c" />
      <path d="M640 342Q672 344 705 358Q740 372 925 469L1050 530V580L925 515Q740 414 700 397Q665 382 640 383z" fill="#c68a2c" />
      <circle cx="541" cy="336.5" r="114.5" fill="#fff" />
      <text x="447.5 544.5" y="385.5" fontSize="154" fontWeight="bold" fill="#231f20" stroke="#231f20" strokeWidth="5" className="font-['Open_Sans',sans-serif]">83</text>
      <text x="6 81 157 229 264 315" y="759" fontSize="115" fontWeight="bold" fill="#231f20" stroke="#231f20" strokeWidth="2" className="font-['Open_Sans',sans-serif]">onoita</text>
      <g fill="none" stroke="#b52bb5">
        <path d="M444.5 241.5h194v190h-194zM443 387.5h195" />
        {handles.map(([x, y]) => (
          <rect key={`${x}-${y}`} x={x - 2.5} y={y - 2.5} width="5" height="5" fill="#fff" />
        ))}
        <rect x="539" y="386" width="4" height="4" fill="#d41ad4" stroke="none" />
      </g>
    </svg>
  );
}

function Light({ color }: { color: string }) {
  return <div className={clsx('size-[14px] rounded-full border border-black/40', color)} />;
}

function DocumentWindow() {
  return (
    <main className="flex w-[1005px] shrink-0 flex-col">
      <div className="flex h-[22px] shrink-0 items-center rounded-tl-[4px] border-b border-[#666] bg-[linear-gradient(to_bottom,#d2d2d2,#a2a2a2)]">
        <div className="flex w-[373px] gap-[7px] pl-2">
          <Light color="bg-[radial-gradient(circle,#8c1020_25%,#e0455a_40%,#f2a0a8)]" />
          <Light color="bg-[radial-gradient(circle_at_50%_75%,#ffe79a,#eda24a_60%,#c87430)]" />
          <Light color="bg-[radial-gradient(circle_at_50%_75%,#c8f59a,#7cc552_60%,#4a9430)]" />
        </div>
        <svg width="16" height="15" className="mt-px shrink-0">
          <path d="M0 1h11l5 4v10H5V6H0z" fill="#b39f7c" />
          <path d="M0 1h11l4 4H0z" fill="#e6cf8e" />
          <text x="6" y="13" fontSize="8" fontWeight="bold" fill="#fff">Ai</text>
        </svg>
        <span className="ml-1 pt-0.5 text-[13px] tracking-[0.25px] whitespace-nowrap text-[#222]">Map.ai* @ 1343.92% (CMYK/Preview)</span>
      </div>
      <div className="flex min-h-0 flex-1">
        <Artboard />
        <div className="w-[15px] bg-[linear-gradient(to_right,#ddd,#fff_45%,#f0f0f0)]">
          <div className="h-3 rounded-t-full border-t-2 border-[#bbb]" />
        </div>
      </div>
    </main>
  );
}

function StatusBar() {
  return (
    <div className="h-[9px] shrink-0 overflow-hidden border-t border-[#aaa] bg-[#e6e6e6]">
      <div className="flex h-[15px] items-center text-[9.5px] whitespace-nowrap [&>*]:shrink-0">
        <div className="flex w-[61px]">
          <Field className="w-[45px] overflow-hidden tracking-[-0.2px]">1343.92%</Field>
          <DropButton />
        </div>
        <div className="flex h-full w-[31px] items-center justify-around border border-[#999]">
          <svg width="7" height="7"><path d="M.5 0v7M7 0v7L2 3.5z" fill="#999" stroke="#999" strokeWidth=".6" /></svg>
          <svg width="5" height="7"><path d="M5 0v7L0 3.5z" fill="#999" /></svg>
        </div>
        <div className="flex w-[46px]">
          <Field className="w-[29px]">1</Field>
          <DropButton />
        </div>
        <div className="flex h-full w-[31px] items-center justify-around border border-[#999]">
          <svg width="5" height="7"><path d="M0 0v7l5-3.5z" fill="#999" /></svg>
          <svg width="7" height="7"><path d="M6.5 0v7M0 0v7l5-3.5z" fill="#999" stroke="#999" strokeWidth=".6" /></svg>
        </div>
        <span className="ml-[72px] w-[97px]">Selection</span>
        <svg width="6" height="10"><path d="M0 0v10l5-5z" fill="#111" /></svg>
        <div className="ml-[11px] flex h-full w-[817px] items-center rounded-l-full bg-[linear-gradient(to_bottom,#ccc,#fff_50%)]">
          <div className="ml-[295px] h-[14px] w-[21px] rounded-full border border-[#234a9c] bg-[linear-gradient(to_bottom,#3a62d0,#9cc8ff_60%,#3a78d8)]" />
        </div>
        <div className="flex w-[32px] items-center justify-around border-l border-[#aaa]">
          <ScrollArrow dir="left" />
          <ScrollArrow dir="right" />
        </div>
        <div className="w-4 pl-1"><Grip /></div>
      </div>
    </div>
  );
}

export default function App() {
  return (
    <div className="relative flex h-[720px] w-[1280px] flex-col overflow-hidden bg-[#f2f2f2] font-['Noto_Sans','Open_Sans',sans-serif]">
      <MenuBar />
      <ControlBar />
      <div className="flex min-h-0 flex-1">
        <Toolbox />
        <div className="flex min-w-0 flex-1 flex-col">
          <div className="flex min-h-0 flex-1">
            <DocumentWindow />
            <div className="flex w-[215px] flex-col">
              <Dock />
              <div className="flex flex-1 justify-end">
                <div className="flex w-4 flex-col border-l border-[#bbb] bg-[linear-gradient(to_right,#ddd,#fff_50%,#eee)]">
                  <div className="flex-1 rounded-b-full border-b-2 border-[#aaa]" />
                  <div className="flex h-[34px] flex-col items-center justify-around">
                    <ScrollArrow dir="up" />
                    <ScrollArrow dir="down" />
                  </div>
                </div>
              </div>
            </div>
          </div>
          <StatusBar />
        </div>
      </div>
      <AppearancePanel />
      <EffectMenu />
    </div>
  );
}
